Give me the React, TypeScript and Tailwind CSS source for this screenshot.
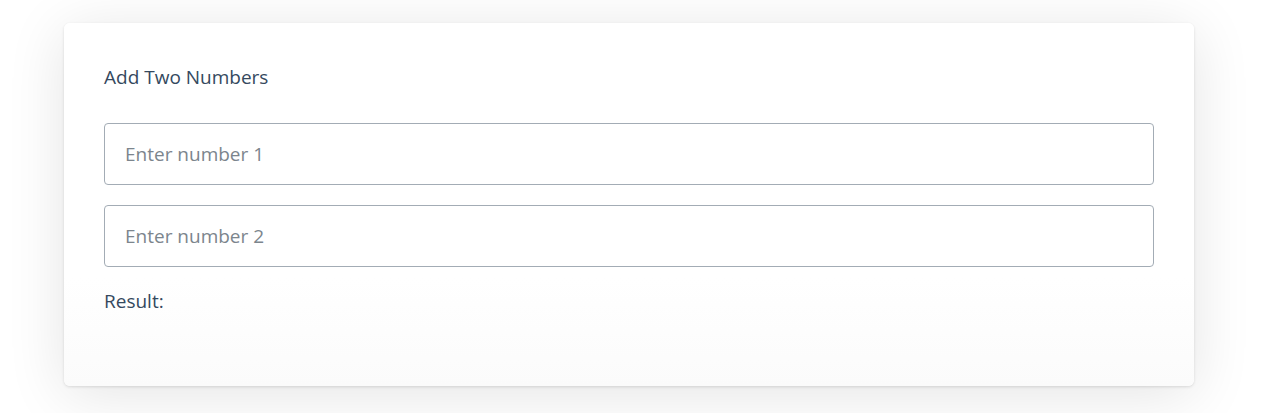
import { useState } from "react";

export default function App() {
  const [a, setA] = useState("");
  const [b, setB] = useState("");

  const result =
    a !== "" && b !== "" ? String(Number(a) + Number(b)) : "";

  return (
    <div className="min-h-[413px] w-full bg-white pt-[23px] font-['Open_Sans',sans-serif] text-[#35495e]">
      <div className="ml-[64px] w-[1130px] h-[363px] rounded-md bg-gradient-to-b from-white from-70% to-[#fbfbfb] px-[40px] pt-[40px] shadow-[0_1px_3px_rgba(0,0,0,0.12),0_8px_60px_rgba(0,0,0,0.11)]">
        <h2 className="text-[19px] leading-[28px]">Add Two Numbers</h2>

        <div className="mt-[32px] flex flex-col gap-[20px]">
          <input
            type="number"
            value={a}
            onChange={(e) => setA(e.target.value)}
            placeholder="Enter number 1"
            className="h-[62px] w-full rounded border border-[#a3acb5] px-[20px] text-[19px] placeholder:text-[#7c858d] outline-none"
          />
          <input
            type="number"
            value={b}
            onChange={(e) => setB(e.target.value)}
            placeholder="Enter number 2"
            className="h-[62px] w-full rounded border border-[#a3acb5] px-[20px] text-[19px] placeholder:text-[#7c858d] outline-none"
          />
        </div>

        <p className="mt-[21px] text-[19px] leading-[26px]">Result: {result}</p>
      </div>
    </div>
  );
}
